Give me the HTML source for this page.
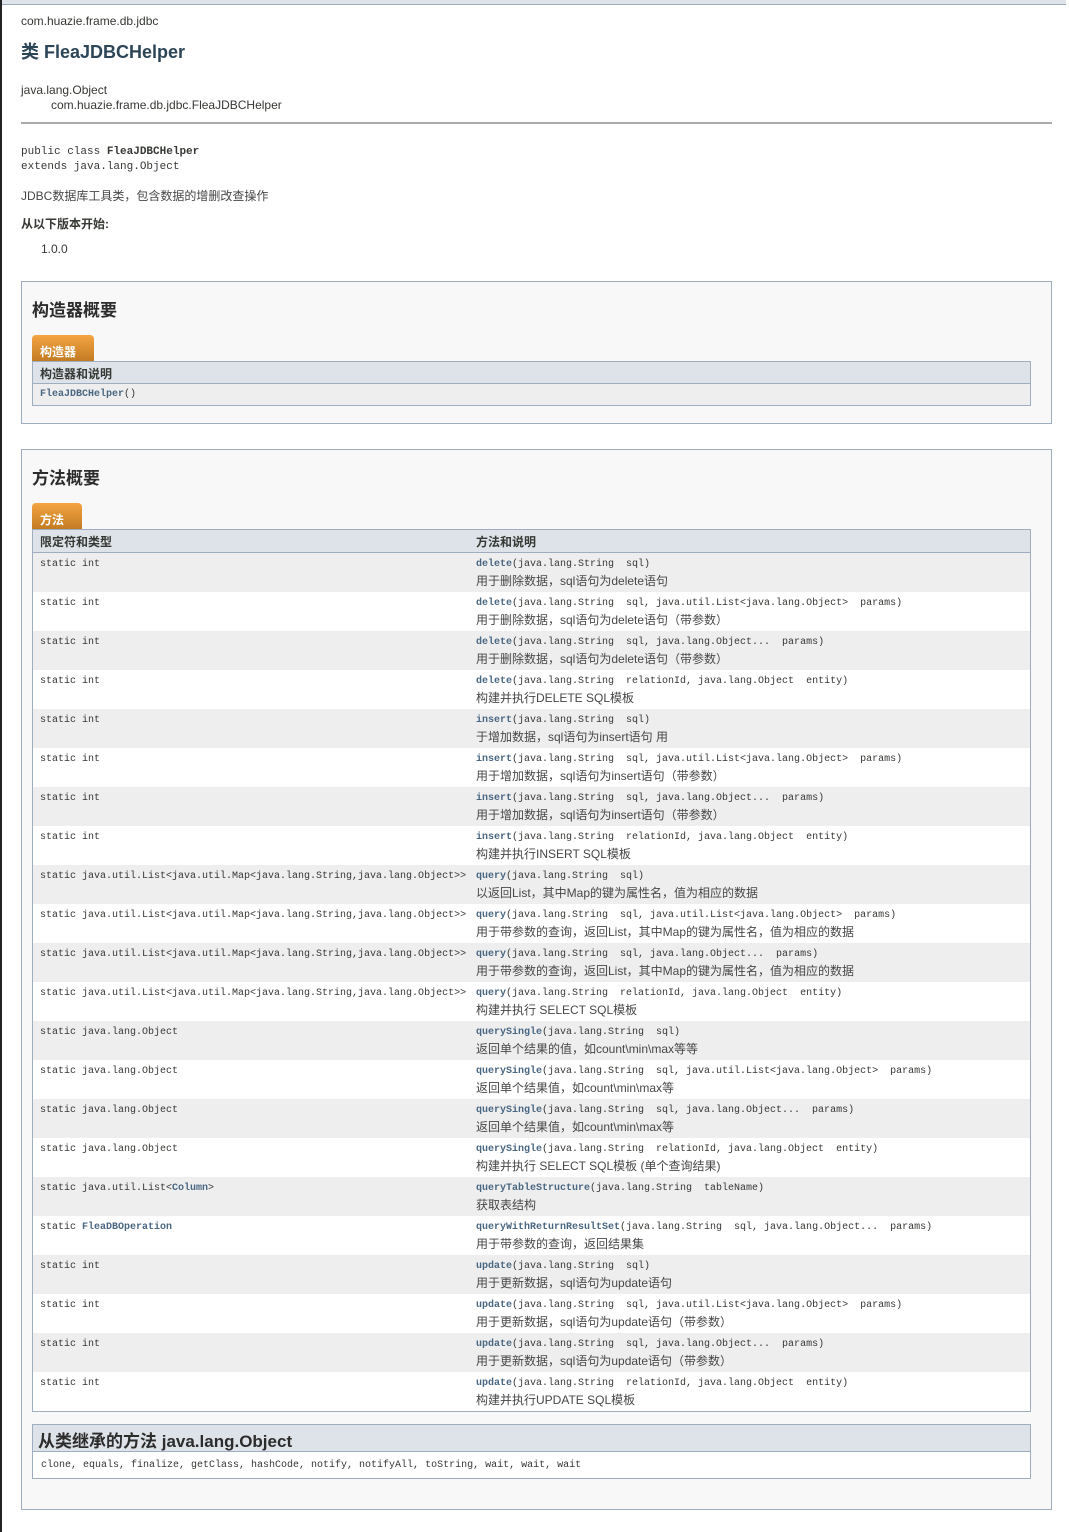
<!DOCTYPE html>
<html><head><meta charset="utf-8">
<style>
*{margin:0;padding:0;box-sizing:border-box}
body{width:1069px;height:1532px;background:#fff;position:relative;overflow:hidden;font-family:"Liberation Sans","Noto Sans CJK SC",sans-serif;color:#353833;font-size:12px}
.a{position:absolute;white-space:pre}
.m{font-family:"Liberation Mono","Noto Sans CJK SC",monospace;font-size:10px;color:#353833}
.b{font-weight:bold;color:#4a6782}
.s{font-size:12px;color:#474747}
</style></head><body>
<div class="a" style="left:0;top:0;width:2px;height:1532px;background:#222"></div>
<div class="a" style="left:2px;top:0;width:1064px;height:5px;background:#dee3e9;border-bottom:1px solid #9eadc0"></div>
<div class="a" style="left:21px;top:14px;font-size:12px;color:#353833">com.huazie.frame.db.jdbc</div>
<div class="a" style="left:21px;top:38px;font-size:18px;font-weight:bold;color:#2c4557">类 FleaJDBCHelper</div>
<div class="a" style="left:21px;top:83px;font-size:12px">java.lang.Object</div>
<div class="a" style="left:51px;top:98px;font-size:12px">com.huazie.frame.db.jdbc.FleaJDBCHelper</div>
<div class="a" style="left:21px;top:122px;width:1031px;height:2px;background:#aaa"></div>
<div class="a m" style="left:21px;top:146px;font-size:11px">public class <b style="color:#353833">FleaJDBCHelper</b></div>
<div class="a m" style="left:21px;top:161px;font-size:11px">extends java.lang.Object</div>
<div class="a" style="left:21px;top:187px;font-size:12px;color:#474747">JDBC数据库工具类，包含数据的增删改查操作</div>
<div class="a" style="left:21px;top:215px;font-size:12px;font-weight:bold">从以下版本开始:</div>
<div class="a" style="left:41px;top:242px;font-size:12px">1.0.0</div>

<div class="a" style="left:21px;top:281px;width:1031px;height:143px;background:#f8f8f8;border:1px solid #9eadc0"></div>
<div class="a" style="left:32px;top:296px;font-size:17px;font-weight:bold;color:#2c2c2c">构造器概要</div>
<div class="a" style="left:32px;top:335px;width:62px;height:27px;background:linear-gradient(#f5a442,#c07a22);border-radius:4px 4px 0 0"></div>
<div class="a" style="left:40px;top:343px;font-size:12px;font-weight:bold;color:#fff">构造器</div>
<div class="a" style="left:32px;top:361px;width:999px;height:45px;border:1px solid #9eadc0;background:#eee"></div>
<div class="a" style="left:33px;top:362px;width:997px;height:22px;background:#dee3e9;border-bottom:1px solid #9eadc0"></div>
<div class="a" style="left:40px;top:365px;font-size:12px;font-weight:bold">构造器和说明</div>
<div class="a m" style="left:40px;top:389px"><span class="b">FleaJDBCHelper</span>()</div>

<div class="a" style="left:21px;top:449px;width:1031px;height:1061px;background:#f8f8f8;border:1px solid #9eadc0"></div>
<div class="a" style="left:32px;top:464px;font-size:17px;font-weight:bold;color:#2c2c2c">方法概要</div>
<div class="a" style="left:32px;top:503px;width:50px;height:27px;background:linear-gradient(#f5a442,#c07a22);border-radius:4px 4px 0 0"></div>
<div class="a" style="left:40px;top:511px;font-size:12px;font-weight:bold;color:#fff">方法</div>
<div class="a" style="left:32px;top:529px;width:999px;height:883px;border:1px solid #9eadc0;background:#fff"></div>
<div class="a" style="left:33px;top:530px;width:997px;height:23px;background:#dee3e9;border-bottom:1px solid #9eadc0"></div>
<div class="a" style="left:40px;top:533px;font-size:12px;font-weight:bold">限定符和类型</div>
<div class="a" style="left:476px;top:533px;font-size:12px;font-weight:bold">方法和说明</div>
<div id="rows"></div>

<div class="a" style="left:32px;top:1424px;width:999px;height:55px;border:1px solid #9eadc0;background:#fff"></div>
<div class="a" style="left:33px;top:1425px;width:997px;height:27px;background:#dee3e9;border-bottom:1px solid #9eadc0"></div>
<div class="a" style="left:38px;top:1427px;font-size:17px;font-weight:bold;color:#2c2c2c">从类继承的方法 java.lang.Object</div>
<div class="a m" style="left:41px;top:1460px">clone, equals, finalize, getClass, hashCode, notify, notifyAll, toString, wait, wait, wait</div>

<script>
var R=[
["static int","delete","(java.lang.String  sql)","用于删除数据，sql语句为delete语句"],
["static int","delete","(java.lang.String  sql, java.util.List&lt;java.lang.Object&gt;  params)","用于删除数据，sql语句为delete语句（带参数）"],
["static int","delete","(java.lang.String  sql, java.lang.Object...  params)","用于删除数据，sql语句为delete语句（带参数）"],
["static int","delete","(java.lang.String  relationId, java.lang.Object  entity)","构建并执行DELETE SQL模板"],
["static int","insert","(java.lang.String  sql)","于增加数据，sql语句为insert语句 用"],
["static int","insert","(java.lang.String  sql, java.util.List&lt;java.lang.Object&gt;  params)","用于增加数据，sql语句为insert语句（带参数）"],
["static int","insert","(java.lang.String  sql, java.lang.Object...  params)","用于增加数据，sql语句为insert语句（带参数）"],
["static int","insert","(java.lang.String  relationId, java.lang.Object  entity)","构建并执行INSERT SQL模板"],
["static java.util.List&lt;java.util.Map&lt;java.lang.String,java.lang.Object&gt;&gt;","query","(java.lang.String  sql)","以返回List，其中Map的键为属性名，值为相应的数据"],
["static java.util.List&lt;java.util.Map&lt;java.lang.String,java.lang.Object&gt;&gt;","query","(java.lang.String  sql, java.util.List&lt;java.lang.Object&gt;  params)","用于带参数的查询，返回List，其中Map的键为属性名，值为相应的数据"],
["static java.util.List&lt;java.util.Map&lt;java.lang.String,java.lang.Object&gt;&gt;","query","(java.lang.String  sql, java.lang.Object...  params)","用于带参数的查询，返回List，其中Map的键为属性名，值为相应的数据"],
["static java.util.List&lt;java.util.Map&lt;java.lang.String,java.lang.Object&gt;&gt;","query","(java.lang.String  relationId, java.lang.Object  entity)","构建并执行 SELECT SQL模板"],
["static java.lang.Object","querySingle","(java.lang.String  sql)","返回单个结果的值，如count\\min\\max等等"],
["static java.lang.Object","querySingle","(java.lang.String  sql, java.util.List&lt;java.lang.Object&gt;  params)","返回单个结果值，如count\\min\\max等"],
["static java.lang.Object","querySingle","(java.lang.String  sql, java.lang.Object...  params)","返回单个结果值，如count\\min\\max等"],
["static java.lang.Object","querySingle","(java.lang.String  relationId, java.lang.Object  entity)","构建并执行 SELECT SQL模板 (单个查询结果)"],
["static java.util.List&lt;<span class=b>Column</span>&gt;","queryTableStructure","(java.lang.String  tableName)","获取表结构"],
["static <span class=b>FleaDBOperation</span>","queryWithReturnResultSet","(java.lang.String  sql, java.lang.Object...  params)","用于带参数的查询，返回结果集"],
["static int","update","(java.lang.String  sql)","用于更新数据，sql语句为update语句"],
["static int","update","(java.lang.String  sql, java.util.List&lt;java.lang.Object&gt;  params)","用于更新数据，sql语句为update语句（带参数）"],
["static int","update","(java.lang.String  sql, java.lang.Object...  params)","用于更新数据，sql语句为update语句（带参数）"],
["static int","update","(java.lang.String  relationId, java.lang.Object  entity)","构建并执行UPDATE SQL模板"]];
var h="";
R.forEach(function(r,i){var y=553+i*39;
h+='<div class="a" style="left:33px;top:'+y+'px;width:997px;height:39px;background:'+(i%2?'#fff':'#eeeeef')+'"></div>';
h+='<div class="a m" style="left:40px;top:'+(y+6)+'px">'+r[0]+'</div>';
h+='<div class="a m" style="left:476px;top:'+(y+6)+'px"><span class="b">'+r[1]+'</span>'+r[2]+'</div>';
h+='<div class="a s" style="left:476px;top:'+(y+19)+'px">'+r[3]+'</div>';});
document.getElementById('rows').outerHTML=h;
</script>
</body></html>
